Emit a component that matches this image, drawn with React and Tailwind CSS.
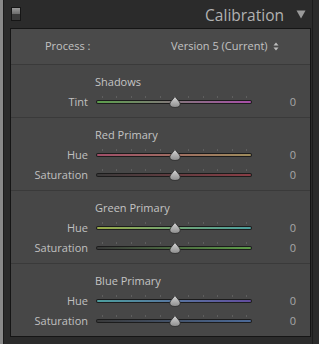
const font = { fontFamily: '"Open Sans", "DejaVu Sans", sans-serif' };

const sections = [
  {
    title: "Shadows",
    rows: [{ label: "Tint", from: "#5c9e4c", to: "#a84ea8" }],
  },
  {
    title: "Red Primary",
    rows: [
      { label: "Hue", from: "#a04e68", to: "#9e8c5c" },
      { label: "Saturation", from: "#3a3a3a", to: "#8a3e46" },
    ],
  },
  {
    title: "Green Primary",
    rows: [
      { label: "Hue", from: "#98aa48", to: "#4c9e9e" },
      { label: "Saturation", from: "#3a3a3a", to: "#5e9c48" },
    ],
  },
  {
    title: "Blue Primary",
    rows: [
      { label: "Hue", from: "#4c9e9e", to: "#624c9e" },
      { label: "Saturation", from: "#3a3a3a", to: "#4c6a98" },
    ],
  },
];

const ticks = [0, 1, 2, 3, 4, 5, 6, 7, 8, 9, 10];

function Slider({ from, to }) {
  return (
    <div className="relative w-[156px] h-[20px]">
      {ticks.map((t) => (
        <div
          key={t}
          className="absolute top-[4px] w-px h-[2px] bg-[#5e5e5e]"
          style={{ left: 6 + t * 14.4 }}
        />
      ))}
      <div className="absolute left-0 right-0 top-[8px] h-[4px] rounded-full bg-[#1c1c1c] p-px">
        <div
          className="h-full rounded-full"
          style={{ background: `linear-gradient(to right, ${from}, ${to})` }}
        />
      </div>
      <svg className="absolute left-[73px] top-[4px]" width="12" height="12" viewBox="0 0 12 12">
        <defs>
          <linearGradient id="th" x1="0" y1="0" x2="0" y2="1">
            <stop offset="0" stopColor="#d6d6d6" />
            <stop offset="1" stopColor="#8c8c8c" />
          </linearGradient>
        </defs>
        <path
          d="M6 0.5 L10.5 6 Q11.8 8 10.8 9.8 Q9.6 11.5 6 11.5 Q2.4 11.5 1.2 9.8 Q0.2 8 1.5 6 Z"
          fill="url(#th)"
          stroke="#2a2a2a"
          strokeWidth="0.8"
        />
      </svg>
    </div>
  );
}

export default function App() {
  return (
    <div className="w-[319px] h-[344px] bg-[#2b2b2b] flex overflow-hidden" style={font}>
      <div className="w-[3px] bg-[#8a8a8a]" />
      <div className="w-px bg-[#1c1c1c]" />
      <div className="w-[308px] flex flex-col">
        <div className="h-[28px] flex items-center pl-[7px] pr-[6px]">
          <div className="w-[10px] h-[14px] border border-[#161616] flex flex-col">
            <div className="h-1/2 bg-gradient-to-b from-[#9a9a9a] to-[#6c6c6c]" />
            <div className="h-1/2 bg-[#3a3a3a]" />
          </div>
          <div className="flex-1 text-right text-[15.5px] text-[#b2b2b2] pr-[12px] pt-[4px] leading-none">
            Calibration
          </div>
          <svg width="10" height="9" viewBox="0 0 10 9">
            <path d="M0.5 0.5 L9.5 0.5 L5 8.5 Z" fill="#9a9a9a" />
          </svg>
        </div>
        <div className="ml-[6px] w-[301px] h-[309px] border border-[#151515] bg-[#474747] flex flex-col">
          <div className="h-[35px] bg-[#4a4a4a] flex items-center text-[11px] text-[#c2c2c2]">
            <div className="pl-[34px] w-[160px]">Process :</div>
            <div className="flex items-center gap-[5px]">
              <span>Version 5 (Current)</span>
              <svg width="6" height="9" viewBox="0 0 6 9">
                <path d="M0.5 3.5 L3 0.5 L5.5 3.5 Z M0.5 5.5 L3 8.5 L5.5 5.5 Z" fill="#bdbdbd" />
              </svg>
            </div>
          </div>
          {sections.map((s) => (
            <div key={s.title} className="border-t border-[#3a3a3a] pt-[9px] pb-[5px] flex flex-col">
              <div className="h-[16px] flex items-center pl-[84px] text-[11px] text-[#c4c4c4]">
                {s.title}
              </div>
              <div className="mt-[2px] flex flex-col">
                {s.rows.map((r) => (
                  <div key={r.label} className="h-[20px] flex items-center text-[11px]">
                    <div className="w-[77px] text-right text-[#c0c0c0]">{r.label}</div>
                    <div className="ml-[8px]">
                      <Slider from={r.from} to={r.to} />
                    </div>
                    <div className="w-[44px] text-right text-[#a8a8a8]">0</div>
                  </div>
                ))}
              </div>
            </div>
          ))}
        </div>
      </div>
      <div className="w-px bg-[#1c1c1c]" />
      <div className="flex-1 bg-[#2b2b2b]" />
    </div>
  );
}
